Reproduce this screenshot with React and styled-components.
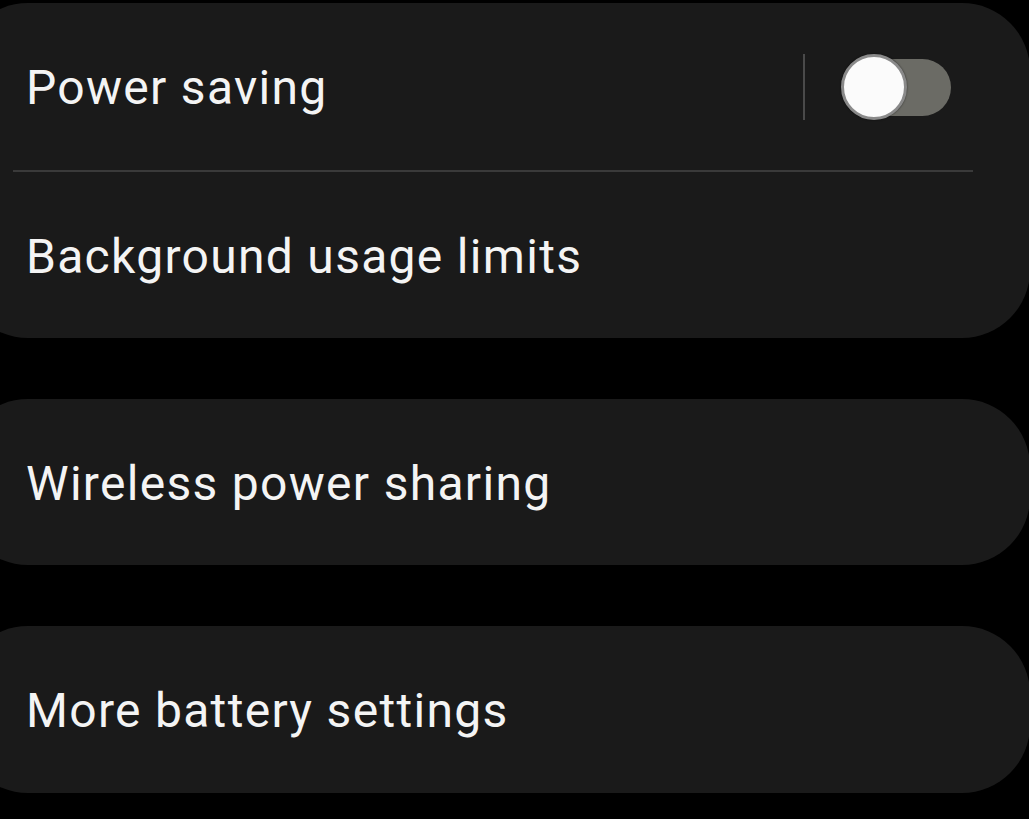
import React from "react";
import styled, { createGlobalStyle } from "styled-components";

const Global = createGlobalStyle`
  html, body { margin: 0; padding: 0; background: #000; overflow: hidden; }
  body { font-family: Roboto, "Noto Sans", sans-serif; }
`;

const Page = styled.div`
  width: 1029px;
  height: 819px;
  overflow: hidden;
  background: #000;
  padding-top: 3px;
  box-sizing: border-box;
  display: flex;
  flex-direction: column;
  gap: 61px;
`;

const Card = styled.div`
  margin-left: -40px;
  width: 1070px;
  background: #1a1a1a;
  border-radius: 68px;
  display: flex;
  flex-direction: column;
`;

const Row = styled.div`
  height: ${(p) => p.$h}px;
  display: flex;
  align-items: center;
  padding-left: 66px;
  padding-right: 79px;
  box-sizing: border-box;
`;

const Label = styled.span`
  flex: 1;
  color: #f4f4f4;
  font-size: 48px;
  font-weight: 400;
  letter-spacing: 1.3px;
  padding-top: 2px;
`;

const Divider = styled.div`
  height: 2px;
  margin: 0 57px 0 53px;
  background: #3a3a3a;
`;

const VSep = styled.div`
  width: 2px;
  height: 66px;
  background: #4a4a4a;
  margin-right: 36px;
`;

const Track = styled.div`
  position: relative;
  width: 110px;
  height: 66px;
  display: flex;
  align-items: center;
  &::before {
    content: "";
    position: absolute;
    left: 2px;
    right: 0;
    top: 5px;
    bottom: 4px;
    border-radius: 30px;
    background: #6b6b65;
  }
`;

const Knob = styled.div`
  position: relative;
  width: 60px;
  height: 60px;
  border-radius: 50%;
  background: #fbfbfb;
  border: 3px solid #8a8a8a;
  box-shadow: 0 0 2px rgba(0, 0, 0, 0.6);
`;

export default function App() {
  return (
    <>
      <Global />
      <Page>
        <Card>
          <Row $h={167}>
            <Label>Power saving</Label>
            <VSep />
            <Track>
              <Knob />
            </Track>
          </Row>
          <Divider />
          <Row $h={166}>
            <Label>Background usage limits</Label>
          </Row>
        </Card>
        <Card>
          <Row $h={166}>
            <Label>Wireless power sharing</Label>
          </Row>
        </Card>
        <Card>
          <Row $h={167}>
            <Label>More battery settings</Label>
          </Row>
        </Card>
      </Page>
    </>
  );
}
